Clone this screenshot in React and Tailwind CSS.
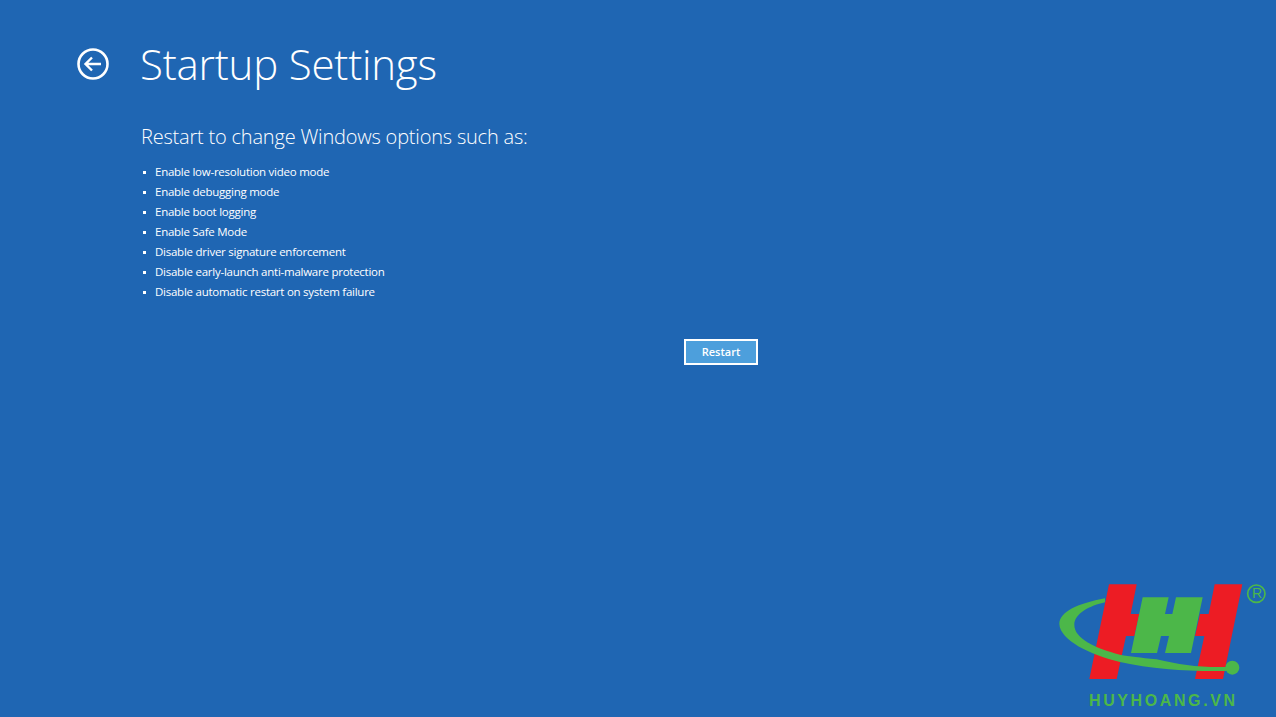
import React from 'react';

const options = [
  'Enable low-resolution video mode',
  'Enable debugging mode',
  'Enable boot logging',
  'Enable Safe Mode',
  'Disable driver signature enforcement',
  'Disable early-launch anti-malware protection',
  'Disable automatic restart on system failure',
];

const BackIcon = () => (
  <svg width="32" height="32" viewBox="0 0 32 32" fill="none" stroke="white" className="shrink-0">
    <circle cx="16" cy="16" r="14.5" strokeWidth="2.6" />
    <path d="M24 16H9M15 9.5L8.5 16L15 22.5" strokeWidth="2.4" />
  </svg>
);

const Logo = () => (
  <div className="absolute right-0 bottom-0 w-[236px] h-[147px]">
    <svg width="236" height="147" viewBox="0 0 708 441">
      <path fill="#ed1c24" d="M207 43H290L272 132H298L283 198H258L230 327H148Z" />
      <path fill="#ed1c24" d="M524 43H607L549 327H465L493 198H465L480 132H506Z" />
      <path fill="#4cb749" d="M308 82H386L375 132H397L408 82H488L453 249H375L387 198H363L351 249H273Z" />
      <path fill="#4cb749" d="M195 85C115 100 58 125 58 162C60 210 150 255 240 276C340 298 450 305 560 303V291C480 293 420 285 350 268C300 262 270 260 240 254C165 235 103 205 103 165C103 130 150 107 195 97Z" />
      <circle cx="577" cy="293" r="21" fill="#4cb749" />
      <circle cx="649" cy="71" r="26" fill="none" stroke="#4cb749" strokeWidth="5" />
    </svg>
    <span className="absolute left-[212px] top-[15px] text-[14px] leading-[17px] text-[#4cb749] font-['Liberation_Sans',sans-serif]">R</span>
    <span className="absolute left-[49px] top-[121px] text-[16px] leading-[20px] font-bold tracking-[2.6px] whitespace-nowrap text-[#4cb749] font-['Liberation_Sans',sans-serif]">HUYHOANG.VN</span>
  </div>
);

export default function App() {
  return (
    <div className="relative w-full h-[717px] overflow-hidden bg-[#1f66b3] text-white font-['Open_Sans',sans-serif]">
      <div className="flex items-center pl-[77px] pt-[35px] gap-[31px]">
        <BackIcon />
        <h1 className="text-[42px] leading-[58px] font-light tracking-[-0.2px]">Startup Settings</h1>
      </div>
      <div className="pl-[141px] pt-[30px]">
        <h2 className="text-[20px] leading-[28px] font-light tracking-[-0.2px]">Restart to change Windows options such as:</h2>
        <ul className="mt-[11px]">
          {options.map((option) => (
            <li key={option} className="flex items-center h-[20px] text-[11.5px] tracking-[-0.25px]">
              <span className="w-[3px] h-[3px] bg-white mr-[9px] ml-[2px]" />
              {option}
            </li>
          ))}
        </ul>
      </div>
      <div className="pl-[684px] pt-[36px]">
        <button className="w-[74px] h-[26px] border-2 border-white bg-[#4d9fdc] text-[11px] font-semibold text-white">
          Restart
        </button>
      </div>
      <Logo />
    </div>
  );
}
